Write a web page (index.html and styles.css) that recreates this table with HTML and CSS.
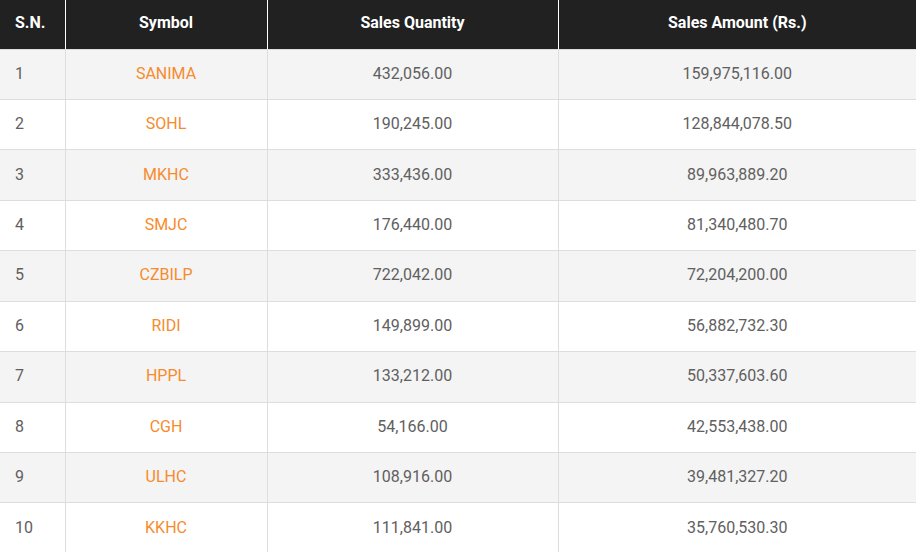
FILE: index.html
```html
<!DOCTYPE html>
<html>
<head>
<meta charset="utf-8">
<link rel="stylesheet" href="styles.css">
</head>
<body>
<table class="sales">
<colgroup>
<col class="c-sn"><col class="c-sym"><col class="c-qty"><col class="c-amt">
</colgroup>
<thead>
<tr><th class="left">S.N.</th><th>Symbol</th><th>Sales Quantity</th><th>Sales Amount (Rs.)</th></tr>
</thead>
<tbody>
<tr><td class="left">1</td><td class="sym">SANIMA</td><td>432,056.00</td><td>159,975,116.00</td></tr>
<tr><td class="left">2</td><td class="sym">SOHL</td><td>190,245.00</td><td>128,844,078.50</td></tr>
<tr><td class="left">3</td><td class="sym">MKHC</td><td>333,436.00</td><td>89,963,889.20</td></tr>
<tr><td class="left">4</td><td class="sym">SMJC</td><td>176,440.00</td><td>81,340,480.70</td></tr>
<tr><td class="left">5</td><td class="sym">CZBILP</td><td>722,042.00</td><td>72,204,200.00</td></tr>
<tr><td class="left">6</td><td class="sym">RIDI</td><td>149,899.00</td><td>56,882,732.30</td></tr>
<tr><td class="left">7</td><td class="sym">HPPL</td><td>133,212.00</td><td>50,337,603.60</td></tr>
<tr><td class="left">8</td><td class="sym">CGH</td><td>54,166.00</td><td>42,553,438.00</td></tr>
<tr><td class="left">9</td><td class="sym">ULHC</td><td>108,916.00</td><td>39,481,327.20</td></tr>
<tr><td class="left">10</td><td class="sym">KKHC</td><td>111,841.00</td><td>35,760,530.30</td></tr>
</tbody>
</table>
</body>
</html>
```
FILE: styles.css
```css
html, body {
  margin: 0;
  padding: 0;
  background: #fff;
}
body {
  font-family: Roboto, "Liberation Sans", sans-serif;
  font-size: 16px;
  color: #606060;
}
.sales {
  width: 916px;
  border-collapse: collapse;
  table-layout: fixed;
}
.c-sn { width: 65px; }
.c-sym { width: 202px; }
.c-qty { width: 291px; }
.c-amt { width: 358px; }
.sales th {
  background: #212121;
  color: #fff;
  font-weight: 700;
  height: 49px;
  padding: 0 15px 3px;
  text-align: center;
  border-left: 1px solid #fff;
  border-bottom: 1px solid #ddd;
  box-sizing: border-box;
}
.sales th:first-child { border-left: none; }
.sales td {
  height: 50.44px;
  padding: 0 15px 2px;
  text-align: center;
  border-left: 1px solid #ddd;
  border-bottom: 1px solid #ddd;
  box-sizing: border-box;
}
.sales td:first-child { border-left: none; }
.sales .left { text-align: left; }
.sales tbody tr:nth-child(odd) td { background: #f4f4f4; }
.sales .sym { color: #f68b2d; }
```
